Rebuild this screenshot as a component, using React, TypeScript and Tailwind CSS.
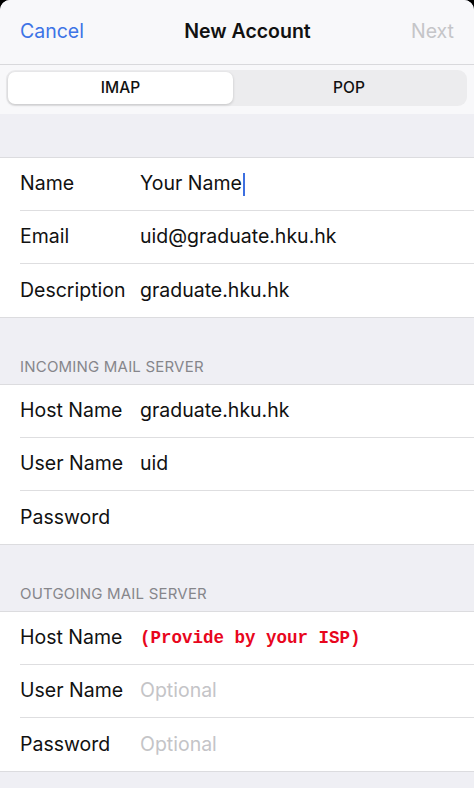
import React from "react";

type Field = {
  label: string;
  value?: string;
  placeholder?: string;
  cursor?: boolean;
  isp?: boolean;
};

const account: Field[] = [
  { label: "Name", value: "Your Name", cursor: true },
  { label: "Email", value: "uid@graduate.hku.hk" },
  { label: "Description", value: "graduate.hku.hk" },
];

const incoming: Field[] = [
  { label: "Host Name", value: "graduate.hku.hk" },
  { label: "User Name", value: "uid" },
  { label: "Password" },
];

const outgoing: Field[] = [
  { label: "Host Name", isp: true },
  { label: "User Name", placeholder: "Optional" },
  { label: "Password", placeholder: "Optional" },
];

function Row({ field, last }: { field: Field; last: boolean }) {
  return (
    <div className="pl-5">
      <div
        className={
          "h-[53px] flex items-center " +
          (last ? "" : "border-b border-[#dedee0]")
        }
      >
        <span className="w-[120px] shrink-0 text-[19.5px] text-[#111]">{field.label}</span>
        {field.value && (
          <span className="text-[19.5px] text-[#111] flex items-center">
            {field.value}
            {field.cursor && <span className="w-[2px] h-[23px] bg-[#3d6fe0] ml-[1px]" />}
          </span>
        )}
        {field.placeholder && (
          <span className="text-[19.5px] text-[#c4c4c7]">{field.placeholder}</span>
        )}
        {field.isp && (
          <span className="text-[17.5px] font-bold text-[#e8061d] font-['Liberation_Mono',monospace]">
            (Provide by your ISP)
          </span>
        )}
      </div>
    </div>
  );
}

function Group({ fields }: { fields: Field[] }) {
  return (
    <div className="bg-white border-y border-[#dcdcdf]">
      {fields.map((f, i) => (
        <Row key={f.label + i} field={f} last={i === fields.length - 1} />
      ))}
    </div>
  );
}

function SectionTitle({ children }: { children: React.ReactNode }) {
  return (
    <div className="h-[66px] flex items-end pl-5 pb-[6px] text-[15px] text-[#86868b] tracking-[0.2px]">
      {children}
    </div>
  );
}

export default function App() {
  return (
    <div className="bg-black w-[474px] h-[788px] font-['Inter','Liberation_Sans',sans-serif]">
      <div className="rounded-t-[10px] bg-[#efeff4] h-full overflow-hidden">
        {/* nav bar */}
        <div className="bg-[#f8f8fa] h-[65px] border-b border-[#d9d9dc] flex items-center justify-between px-5">
          <span className="text-[19.5px] text-[#3d74e6]">Cancel</span>
          <span className="text-[19.5px] font-semibold text-[#111]">New Account</span>
          <span className="text-[19.5px] text-[#c5c5c8]">Next</span>
        </div>
        {/* IMAP / POP switch */}
        <div className="bg-[#f8f8fa] h-[49px] pt-[5px] px-[6px]">
          <div className="h-[36px] rounded-[9px] bg-[#ececee] p-[2px] flex mr-[1px]">
            <div className="w-[225px] rounded-[7px] bg-white shadow-[0_1px_3px_rgba(0,0,0,0.18)] flex items-center justify-center text-[15.5px] font-medium text-[#111]">
              IMAP
            </div>
            <div className="flex-1 flex items-center justify-center text-[15.5px] font-medium text-[#111]">
              POP
            </div>
          </div>
        </div>
        <div className="h-[43px]" />
        <Group fields={account} />
        <SectionTitle>INCOMING MAIL SERVER</SectionTitle>
        <Group fields={incoming} />
        <SectionTitle>OUTGOING MAIL SERVER</SectionTitle>
        <Group fields={outgoing} />
      </div>
    </div>
  );
}
